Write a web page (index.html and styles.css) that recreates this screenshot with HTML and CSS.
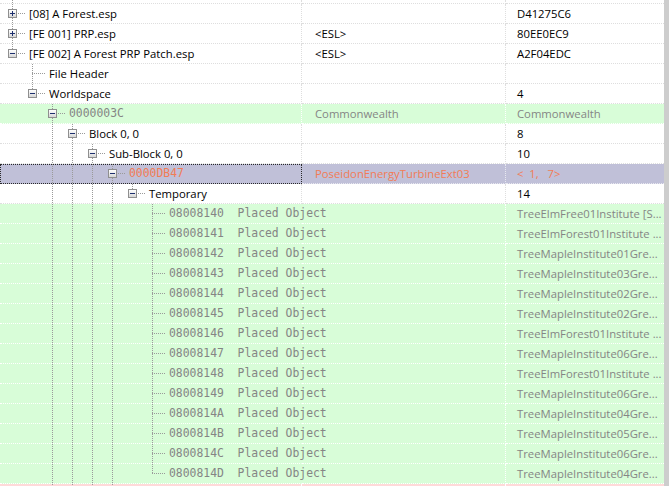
FILE: index.html
```html
<!DOCTYPE html>
<html>
<head>
<meta charset="utf-8">
<link rel="stylesheet" href="styles.css">
</head>
<body>
<div class="view">
  <div class="rows">
    <div class="row w top">
      <div class="c1"><span class="own pipe"></span></div>
      <div class="c2"></div>
      <div class="c3"></div>
    </div>

    <div class="row w">
      <div class="c1"><span class="own tee"><i class="box plus"></i></span><span class="t">[08] A Forest.esp</span></div>
      <div class="c2"></div>
      <div class="c3">D41275C6</div>
    </div>
    <div class="row w">
      <div class="c1"><span class="own tee"><i class="box plus"></i></span><span class="t">[FE 001] PRP.esp</span></div>
      <div class="c2">&lt;ESL&gt;</div>
      <div class="c3">80EE0EC9</div>
    </div>
    <div class="row w">
      <div class="c1"><span class="own elb"><i class="box minus"></i></span><span class="t">[FE 002] A Forest PRP Patch.esp</span></div>
      <div class="c2">&lt;ESL&gt;</div>
      <div class="c3">A2F04EDC</div>
    </div>
    <div class="row w">
      <div class="c1"><span class="ind"></span><span class="own tee"></span><span class="t">File Header</span></div>
      <div class="c2"></div>
      <div class="c3"></div>
    </div>
    <div class="row w">
      <div class="c1"><span class="ind"></span><span class="own elb"><i class="box minus"></i></span><span class="t">Worldspace</span></div>
      <div class="c2"></div>
      <div class="c3">4</div>
    </div>
    <div class="row g">
      <div class="c1"><span class="ind"></span><span class="ind"></span><span class="own tee"><i class="box minus"></i></span><span class="t mono gray">0000003C</span></div>
      <div class="c2 gray">Commonwealth</div>
      <div class="c3 gray">Commonwealth</div>
    </div>
    <div class="row w">
      <div class="c1"><span class="ind"></span><span class="ind"></span><span class="ind pipe"></span><span class="own tee"><i class="box minus"></i></span><span class="t">Block 0, 0</span></div>
      <div class="c2"></div>
      <div class="c3">8</div>
    </div>
    <div class="row w">
      <div class="c1"><span class="ind"></span><span class="ind"></span><span class="ind pipe"></span><span class="ind pipe"></span><span class="own tee"><i class="box minus"></i></span><span class="t">Sub-Block 0, 0</span></div>
      <div class="c2"></div>
      <div class="c3">10</div>
    </div>
    <div class="row s">
      <div class="c1"><span class="ind"></span><span class="ind"></span><span class="ind pipe"></span><span class="ind pipe"></span><span class="ind pipe"></span><span class="own tee"><i class="box minus"></i></span><span class="t mono orange">0000DB47</span></div>
      <div class="c2 orange">PoseidonEnergyTurbineExt03</div>
      <div class="c3 orange">&lt;&nbsp; 1,&nbsp;&nbsp; 7&gt;</div>
    </div>
    <div class="row w">
      <div class="c1"><span class="ind"></span><span class="ind"></span><span class="ind pipe"></span><span class="ind pipe"></span><span class="ind pipe"></span><span class="ind pipe"></span><span class="own elb"><i class="box minus"></i></span><span class="t">Temporary</span></div>
      <div class="c2"></div>
      <div class="c3">14</div>
    </div>

    <div class="row g ov"><div class="c1"><span class="ind"></span><span class="ind"></span><span class="ind pipe"></span><span class="ind pipe"></span><span class="ind pipe"></span><span class="ind pipe"></span><span class="ind"></span><span class="own tee"></span><span class="t mono gray">08008140  Placed Object</span></div><div class="c2"></div><div class="c3 gray">TreeElmFree01Institute [S...</div></div>
    <div class="row g ov"><div class="c1"><span class="ind"></span><span class="ind"></span><span class="ind pipe"></span><span class="ind pipe"></span><span class="ind pipe"></span><span class="ind pipe"></span><span class="ind"></span><span class="own tee"></span><span class="t mono gray">08008141  Placed Object</span></div><div class="c2"></div><div class="c3 gray">TreeElmForest01Institute ...</div></div>
    <div class="row g ov"><div class="c1"><span class="ind"></span><span class="ind"></span><span class="ind pipe"></span><span class="ind pipe"></span><span class="ind pipe"></span><span class="ind pipe"></span><span class="ind"></span><span class="own tee"></span><span class="t mono gray">08008142  Placed Object</span></div><div class="c2"></div><div class="c3 gray">TreeMapleInstitute01Gre...</div></div>
    <div class="row g ov"><div class="c1"><span class="ind"></span><span class="ind"></span><span class="ind pipe"></span><span class="ind pipe"></span><span class="ind pipe"></span><span class="ind pipe"></span><span class="ind"></span><span class="own tee"></span><span class="t mono gray">08008143  Placed Object</span></div><div class="c2"></div><div class="c3 gray">TreeMapleInstitute03Gre...</div></div>
    <div class="row g ov"><div class="c1"><span class="ind"></span><span class="ind"></span><span class="ind pipe"></span><span class="ind pipe"></span><span class="ind pipe"></span><span class="ind pipe"></span><span class="ind"></span><span class="own tee"></span><span class="t mono gray">08008144  Placed Object</span></div><div class="c2"></div><div class="c3 gray">TreeMapleInstitute02Gre...</div></div>
    <div class="row g ov"><div class="c1"><span class="ind"></span><span class="ind"></span><span class="ind pipe"></span><span class="ind pipe"></span><span class="ind pipe"></span><span class="ind pipe"></span><span class="ind"></span><span class="own tee"></span><span class="t mono gray">08008145  Placed Object</span></div><div class="c2"></div><div class="c3 gray">TreeMapleInstitute02Gre...</div></div>
    <div class="row g ov"><div class="c1"><span class="ind"></span><span class="ind"></span><span class="ind pipe"></span><span class="ind pipe"></span><span class="ind pipe"></span><span class="ind pipe"></span><span class="ind"></span><span class="own tee"></span><span class="t mono gray">08008146  Placed Object</span></div><div class="c2"></div><div class="c3 gray">TreeElmForest01Institute ...</div></div>
    <div class="row g ov"><div class="c1"><span class="ind"></span><span class="ind"></span><span class="ind pipe"></span><span class="ind pipe"></span><span class="ind pipe"></span><span class="ind pipe"></span><span class="ind"></span><span class="own tee"></span><span class="t mono gray">08008147  Placed Object</span></div><div class="c2"></div><div class="c3 gray">TreeMapleInstitute06Gre...</div></div>
    <div class="row g ov"><div class="c1"><span class="ind"></span><span class="ind"></span><span class="ind pipe"></span><span class="ind pipe"></span><span class="ind pipe"></span><span class="ind pipe"></span><span class="ind"></span><span class="own tee"></span><span class="t mono gray">08008148  Placed Object</span></div><div class="c2"></div><div class="c3 gray">TreeElmForest01Institute ...</div></div>
    <div class="row g ov"><div class="c1"><span class="ind"></span><span class="ind"></span><span class="ind pipe"></span><span class="ind pipe"></span><span class="ind pipe"></span><span class="ind pipe"></span><span class="ind"></span><span class="own tee"></span><span class="t mono gray">08008149  Placed Object</span></div><div class="c2"></div><div class="c3 gray">TreeMapleInstitute06Gre...</div></div>
    <div class="row g ov"><div class="c1"><span class="ind"></span><span class="ind"></span><span class="ind pipe"></span><span class="ind pipe"></span><span class="ind pipe"></span><span class="ind pipe"></span><span class="ind"></span><span class="own tee"></span><span class="t mono gray">0800814A  Placed Object</span></div><div class="c2"></div><div class="c3 gray">TreeMapleInstitute04Gre...</div></div>
    <div class="row g ov"><div class="c1"><span class="ind"></span><span class="ind"></span><span class="ind pipe"></span><span class="ind pipe"></span><span class="ind pipe"></span><span class="ind pipe"></span><span class="ind"></span><span class="own tee"></span><span class="t mono gray">0800814B  Placed Object</span></div><div class="c2"></div><div class="c3 gray">TreeMapleInstitute05Gre...</div></div>
    <div class="row g ov"><div class="c1"><span class="ind"></span><span class="ind"></span><span class="ind pipe"></span><span class="ind pipe"></span><span class="ind pipe"></span><span class="ind pipe"></span><span class="ind"></span><span class="own tee"></span><span class="t mono gray">0800814C  Placed Object</span></div><div class="c2"></div><div class="c3 gray">TreeMapleInstitute06Gre...</div></div>
    <div class="row g ov"><div class="c1"><span class="ind"></span><span class="ind"></span><span class="ind pipe"></span><span class="ind pipe"></span><span class="ind pipe"></span><span class="ind pipe"></span><span class="ind"></span><span class="own elb"></span><span class="t mono gray">0800814D  Placed Object</span></div><div class="c2"></div><div class="c3 gray">TreeMapleInstitute04Gre...</div></div>

    <div class="row p">
      <div class="c1"><span class="ind"></span><span class="ind"></span><span class="ind pipe"></span><span class="ind pipe"></span><span class="ind pipe"></span><span class="own tee"></span></div>
      <div class="c2"></div>
      <div class="c3"></div>
    </div>
  </div>
  <div class="vscroll"></div>
</div>
</body>
</html>
```

FILE: styles.css
```css
html, body {
  margin: 0;
  padding: 0;
  background: #ffffff;
  overflow: hidden;
}

.view {
  display: flex;
  width: 669px;
  height: 486px;
  overflow: hidden;
  font-family: "Open Sans", "Noto Sans", sans-serif;
  font-size: 11.3px;
  color: #000;
}

.rows {
  width: 664px;
  flex: none;
  display: flex;
  flex-direction: column;
}

.vscroll {
  flex: 1;
  background: #cdcdcd;
}

.row {
  display: flex;
  height: 20px;
  flex: none;
  --grid: #dedede;
  background: #ffffff;
}
.row.top { height: 4px; }
.row.g { background: #d8fdd8; --grid: #ffffff; }
.row.s { background: #c0c0d8; --grid: #e8e8f0; }
.row.p { background: #ffd9d9; --grid: #ffffff; }

.c1, .c2, .c3 {
  box-sizing: border-box;
  height: 100%;
  border-bottom: 1px dotted var(--grid);
  white-space: pre;
  overflow: hidden;
  line-height: 19px;
}

.c1 {
  width: 302px;
  flex: none;
  display: flex;
  align-items: flex-start;
  padding-left: 2px;
  border-right: 1px dotted var(--grid);
}
.row.s .c1 {
  outline: 1px dotted #2a2a2a;
  outline-offset: -1px;
}
.row.ov .c1 {
  overflow: visible;
  border-right-color: transparent;
}

.c2 {
  width: 204px;
  flex: none;
  padding-left: 13px;
  border-right: 1px dotted var(--grid);
}

.c3 {
  width: 158px;
  flex: none;
  padding-left: 11px;
}

.ind {
  width: 20px;
  height: 19px;
  flex: none;
}

.own {
  width: 24px;
  height: 19px;
  flex: none;
  box-sizing: border-box;
  padding: 5px 0 0 6px;
  display: block;
}

.pipe {
  background: repeating-linear-gradient(to bottom, #9a9a9a 0 1px, transparent 1px 2px) 10px 0 / 1px 100% no-repeat;
}
.row.top .pipe { height: 3px; }

.tee {
  background:
    repeating-linear-gradient(to bottom, #9a9a9a 0 1px, transparent 1px 2px) 10px 0 / 1px 100% no-repeat,
    repeating-linear-gradient(to right, #9a9a9a 0 1px, transparent 1px 2px) 10px 9px / 14px 1px no-repeat;
}

.elb {
  background:
    repeating-linear-gradient(to bottom, #9a9a9a 0 1px, transparent 1px 2px) 10px 0 / 1px 10px no-repeat,
    repeating-linear-gradient(to right, #9a9a9a 0 1px, transparent 1px 2px) 10px 9px / 14px 1px no-repeat;
}

.box {
  display: block;
  width: 9px;
  height: 9px;
  box-sizing: border-box;
  border: 1px solid #8f8f8f;
}
.box.minus {
  background:
    linear-gradient(#1d2f6e, #1d2f6e) 1px 3px / 5px 1px no-repeat,
    linear-gradient(#ffffff, #d6d6d6);
}
.box.plus {
  background:
    linear-gradient(#1d2f6e, #1d2f6e) 1px 3px / 5px 1px no-repeat,
    linear-gradient(#1d2f6e, #1d2f6e) 3px 1px / 1px 5px no-repeat,
    linear-gradient(#ffffff, #d6d6d6);
}

.t {
  margin-left: 3px;
  line-height: 19px;
  white-space: pre;
}

.mono {
  font-family: "DejaVu Sans Mono", "Liberation Mono", monospace;
  font-size: 11.4px;
}

.gray { color: #858585; }
.orange { color: #f27c56; }
```
